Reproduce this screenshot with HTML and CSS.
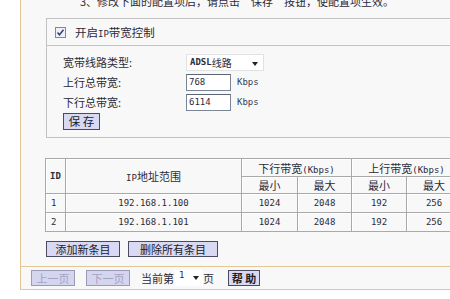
FILE: index.html
```html
<!DOCTYPE html>
<html lang="zh-CN">
<head>
    <meta charset="UTF-8">
    <title>IP带宽控制</title>
    <link rel="stylesheet" href="styles.css">
</head>
<body>
    <div class="frame">
        <div class="note">3、修改下面的配置项后，请点击“保存”按钮，使配置项生效。</div>

        <!-- 开关与总带宽设置 -->
        <div class="panel">
            <div class="panel-head">
                <svg class="check" width="11" height="11" viewBox="0 0 11 11">
                    <rect x="0.5" y="0.5" width="10" height="10" fill="#eef0f4" stroke="#7f8a99"/>
                    <path d="M2.5 5.5 L4.5 7.8 L8.5 2.8" fill="none" stroke="#2b3a80" stroke-width="1.4"/>
                </svg>
                <span>开启<span class="m">IP</span>带宽控制</span>
            </div>
            <div class="panel-body">
                <div class="row">
                    <label>宽带线路类型:</label>
                    <div class="select wide"><span class="m">ADSL</span>线路<i class="arrow"></i></div>
                </div>
                <div class="row">
                    <label>上行总带宽:</label>
                    <div class="input m">768</div>
                    <span class="m unit">Kbps</span>
                </div>
                <div class="row">
                    <label>下行总带宽:</label>
                    <div class="input m">6114</div>
                    <span class="m unit">Kbps</span>
                </div>
                <button class="btn save">保 存</button>
            </div>
        </div>

        <!-- 规则列表 -->
        <table class="rules">
            <colgroup>
                <col style="width:20px"><col style="width:176px">
                <col style="width:56px"><col style="width:54px">
                <col style="width:55px"><col style="width:55px">
            </colgroup>
            <tr class="h1">
                <th rowspan="2" class="m">ID</th>
                <th rowspan="2"><span class="m">IP</span>地址范围</th>
                <th colspan="2">下行带宽<span class="m">(Kbps)</span></th>
                <th colspan="2">上行带宽<span class="m">(Kbps)</span></th>
            </tr>
            <tr class="h2">
                <th>最小</th><th>最大</th><th>最小</th><th>最大</th>
            </tr>
            <tr>
                <td class="m">1</td><td class="m">192.168.1.100</td>
                <td class="m">1024</td><td class="m">2048</td><td class="m">192</td><td class="m">256</td>
            </tr>
            <tr>
                <td class="m">2</td><td class="m">192.168.1.101</td>
                <td class="m">1024</td><td class="m">2048</td><td class="m">192</td><td class="m">256</td>
            </tr>
        </table>

        <div class="actions">
            <button class="btn add">添加新条目</button>
            <button class="btn del">删除所有条目</button>
        </div>

        <div class="pager">
            <button class="btn off">上一页</button>
            <button class="btn off">下一页</button>
            <span class="cur">当前第</span>
            <div class="select page"><span class="m">1</span><i class="arrow"></i></div>
            <span>页</span>
            <button class="btn help">帮 助</button>
        </div>
    </div>
</body>
</html>
```

FILE: styles.css
```css
body {
    margin: 0;
    background: #fff;
    overflow: hidden;
    font-family: "Noto Sans CJK SC", "Liberation Sans", sans-serif;
    font-size: 11px;
    color: #2b2b3a;
}
.m {
    font-family: "DejaVu Sans Mono", "Noto Sans CJK SC", monospace;
    font-size: 9px;
}
.frame {
    margin-left: 20px;
    width: 640px;
    background: #f8f8f8;
    border-left: 1px solid #e5c796;
    border-bottom: 1px solid #e5c796;
}
.note {
    margin-top: -7px;
    padding-left: 59px;
    line-height: 16px;
    height: 16px;
}
.panel {
    margin: 9px 0 0 25px;
    border: 1px solid #c2c2c2;
    border-right: none;
}
.panel-head {
    height: 26px;
    display: flex;
    align-items: center;
    gap: 9px;
    padding-left: 8px;
    border-bottom: 1px solid #c2c2c2;
    font-size: 11.5px;
}
.check {
    display: block;
}
.panel-body {
    padding: 6px 0 7px 16px;
}
.row {
    height: 20px;
    display: flex;
    align-items: center;
}
.row label {
    width: 123px;
}
.select {
    background: #fff;
    height: 17px;
    display: flex;
    align-items: center;
    padding-left: 3px;
    box-sizing: border-box;
    position: relative;
}
.select.wide {
    width: 78px;
    border: 1px solid #e2e2e2;
    font-size: 10px;
}
.select.wide .m {
    font-weight: bold;
}
.arrow {
    position: absolute;
    right: 5px;
    top: 7px;
    border-left: 3px solid transparent;
    border-right: 3px solid transparent;
    border-top: 4px solid #222;
}
.input {
    width: 45px;
    height: 17px;
    box-sizing: border-box;
    border: 1px solid #7a8696;
    border-top-color: #5c6674;
    background: #fff;
    padding-left: 2px;
    line-height: 15px;
}
.unit {
    margin-left: 6px;
    color: #33405a;
}
.btn {
    font-family: "Noto Sans CJK SC", sans-serif;
    font-size: 11px;
    color: #222;
    background: #d9d9f4;
    border: 1px solid #4a4a60;
    height: 16px;
    padding: 0;
    line-height: 13px;
    box-sizing: border-box;
}
.save {
    width: 37px;
    height: 17px;
    margin-top: 1px;
    font-size: 11.5px;
}
.rules {
    margin: 20px 0 0 24px;
    width: 416px;
    table-layout: fixed;
    border-collapse: separate;
    border-spacing: 0;
    border-top: 1px solid #a9a9a9;
    border-left: 1px solid #a9a9a9;
}
.rules th, .rules td {
    border-right: 1px solid #a9a9a9;
    border-bottom: 1px solid #a9a9a9;
    box-shadow: inset 1px 1px 0 #fff;
    padding: 0;
    text-align: center;
    font-weight: normal;
    white-space: nowrap;
    overflow: hidden;
}
.rules th.m {
    font-weight: bold;
}
.rules tr.h1 th {
    height: 17px;
}
.rules tr.h2 th {
    height: 15px;
}
.rules td {
    height: 18px;
}
.rules td:first-child {
    text-align: left;
    padding-left: 5px;
}
.actions {
    margin: 9px 0 0 25px;
    display: flex;
    gap: 8px;
}
.add {
    width: 74px;
}
.del {
    width: 90px;
}
.pager {
    margin-top: 9px;
    border-top: 1px solid #e5c796;
    padding: 3px 0 3px 10px;
    display: flex;
    align-items: center;
    height: 16px;
}
.off {
    width: 44px;
    color: #a3a3c2;
    background: #d5d5ef;
    border-color: #9a9ab8;
    margin-right: 11px;
}
.select.page {
    width: 28px;
    height: 16px;
    margin-left: 1px;
    align-items: flex-start;
    padding-left: 4px;
}
.select.page .arrow {
    top: 6px;
    right: 4px;
}
.help {
    width: 32px;
    margin-left: 14px;
    font-weight: bold;
}
```
